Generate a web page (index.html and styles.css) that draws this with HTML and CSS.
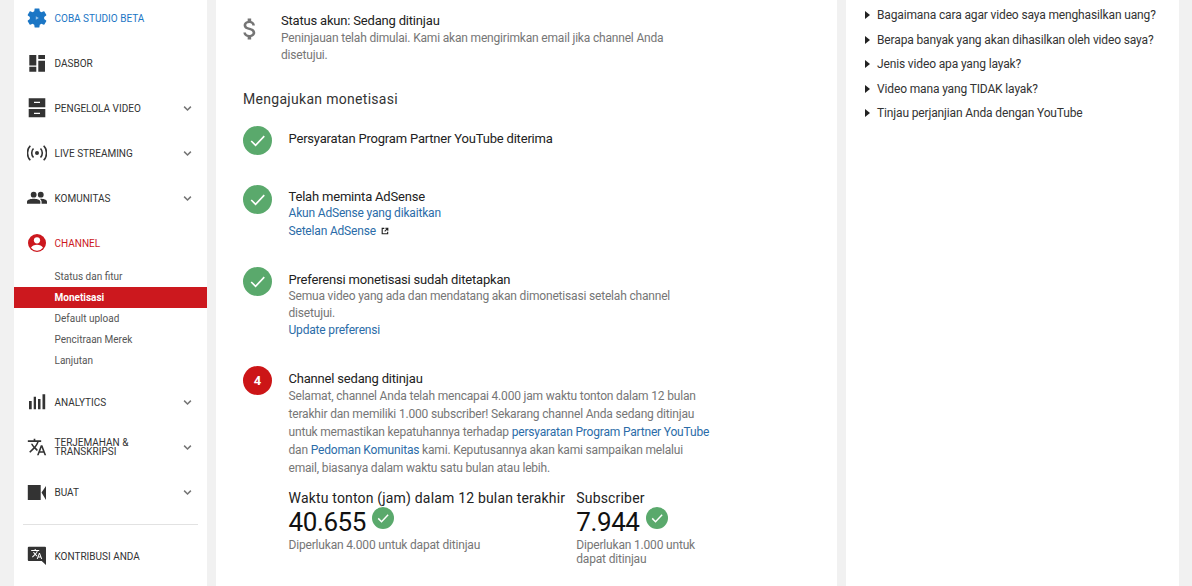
FILE: index.html
```html
<!DOCTYPE html>
<html lang="id">
<head>
<meta charset="utf-8">
<title>Monetisasi</title>
<link rel="stylesheet" href="styles.css">
</head>
<body>
<div class="page">
  <nav class="sidebar">
    <a class="nav-item blue"><svg class="nav-icon" viewBox="2 2 20 20"><path fill="#1b76c5" d="M19.14 12.94c.04-.3.06-.61.06-.94 0-.32-.02-.64-.07-.94l2.03-1.58c.18-.14.23-.41.12-.61l-1.92-3.32c-.12-.22-.37-.29-.59-.22l-2.39.96c-.5-.38-1.03-.7-1.62-.94l-.36-2.54c-.04-.24-.24-.41-.48-.41h-3.84c-.24 0-.43.17-.47.41l-.36 2.54c-.59.24-1.13.57-1.62.94l-2.39-.96c-.22-.08-.47 0-.59.22L2.74 8.87c-.12.21-.08.47.12.61l2.03 1.58c-.05.3-.09.63-.09.94s.02.64.07.94l-2.03 1.58c-.18.14-.23.41-.12.61l1.92 3.32c.12.22.37.29.59.22l2.39-.96c.5.38 1.03.7 1.62.94l.36 2.54c.05.24.24.41.48.41h3.84c.24 0 .44-.17.47-.41l.36-2.54c.59-.24 1.13-.56 1.62-.94l2.39.96c.22.08.47 0 .59-.22l1.92-3.32c.12-.22.07-.47-.12-.61l-2.01-1.58z"/><path fill="#9cc4e8" d="M10.800 10.300l3 1.700-3 1.700z"/></svg><span class="nav-label">COBA STUDIO BETA</span></a>
    <a class="nav-item"><svg class="nav-icon" viewBox="0 0 20 20"><path fill="#333" d="M2.300 2h7v10.600h-7zM2.300 13.700h7v5h-7zM11.300 2H18v4h-6.700zM11.300 7.700H18v11h-6.700z"/></svg><span class="nav-label">DASBOR</span></a>
    <a class="nav-item"><svg class="nav-icon" viewBox="0 0 20 20"><path fill="#333" fill-rule="evenodd" d="M1.700.3h16.600v9H1.700zM1.700 11h16.600v8.300H1.700zM7 3.700v1.300h6V3.700zM7 14.700V16h6v-1.300z"/></svg><span class="nav-label">PENGELOLA VIDEO</span><svg class="chev" viewBox="0 0 12 8"><path d="M1.500 1.500L6 6l4.500-4.500" fill="none" stroke="#757575" stroke-width="2"/></svg></a>
    <a class="nav-item"><svg class="nav-icon" viewBox="0 0 20 20"><circle cx="10" cy="10" r="2" fill="#333"/><path fill="none" stroke="#333" stroke-width="1.600" d="M6.500 5.500a6.500 6.500 0 0 0 0 9M13.500 5.500a6.500 6.500 0 0 1 0 9M3.300 2.800a10.500 10.500 0 0 0 0 14.400M16.700 2.800a10.500 10.500 0 0 1 0 14.400"/></svg><span class="nav-label">LIVE STREAMING</span><svg class="chev" viewBox="0 0 12 8"><path d="M1.500 1.500L6 6l4.500-4.500" fill="none" stroke="#757575" stroke-width="2"/></svg></a>
    <a class="nav-item"><svg class="nav-icon" viewBox="0 0 24 24"><circle cx="8" cy="8" r="3.500" fill="#333"/><circle cx="16.500" cy="8" r="3.500" fill="#333"/><path fill="#333" d="M0 19v-2.500C0 14 5 13 8 13s8 1 8 3.500V19zM17.500 19v-2.500c0-1.400-.8-2.500-2-3.400l1-.1c3 0 7.500 1 7.500 3.500V19z"/></svg><span class="nav-label">KOMUNITAS</span><svg class="chev" viewBox="0 0 12 8"><path d="M1.500 1.500L6 6l4.500-4.500" fill="none" stroke="#757575" stroke-width="2"/></svg></a>
    <a class="nav-item red"><svg class="nav-icon" viewBox="0 0 20 20"><circle cx="10" cy="10" r="9" fill="#cc181e"/><circle cx="10" cy="7.300" r="3.100" fill="#fff"/><path fill="#fff" d="M4 14.800c.9-2 3.400-3 6-3s5.100 1 6 3a7.500 7.500 0 0 1-6 2.900 7.500 7.500 0 0 1-6-2.900z"/></svg><span class="nav-label">CHANNEL</span></a>
    <ul class="subnav">
      <li class="sub-item">Status dan fitur</li>
      <li class="sub-item active">Monetisasi</li>
      <li class="sub-item">Default upload</li>
      <li class="sub-item">Pencitraan Merek</li>
      <li class="sub-item">Lanjutan</li>
    </ul>
    <a class="nav-item"><svg class="nav-icon" viewBox="0 0 20 20"><path fill="#333" d="M2 9h2.700v8.300H2zM6.700 4.700H9v12.600H6.700zM11 7h2.500v10.300H11zM15.500 2.300h2.700v15h-2.700z"/></svg><span class="nav-label">ANALYTICS</span><svg class="chev" viewBox="0 0 12 8"><path d="M1.500 1.500L6 6l4.500-4.500" fill="none" stroke="#757575" stroke-width="2"/></svg></a>
    <a class="nav-item"><svg class="nav-icon" viewBox="0 0 24 24"><path fill="#333" d="M12.870 15.070l-2.540-2.510.03-.03c1.740-1.940 2.980-4.170 3.710-6.530H17V4h-7V2H8v2H1v1.990h11.170C11.500 7.920 10.440 9.750 9 11.350 8.070 10.320 7.300 9.190 6.690 8h-2c.73 1.630 1.730 3.170 2.980 4.560l-5.090 5.020L4 19l5-5 3.110 3.110.76-2.040zM18.500 10h-2L12 22h2l1.120-3h4.750L21 22h2l-4.500-12zm-2.620 7l1.620-4.330L19.120 17h-3.240z"/></svg><span class="nav-label">TERJEMAHAN &amp; TRANSKRIPSI</span><svg class="chev" viewBox="0 0 12 8"><path d="M1.500 1.500L6 6l4.500-4.500" fill="none" stroke="#757575" stroke-width="2"/></svg></a>
    <a class="nav-item"><svg class="nav-icon" viewBox="0 0 20 20"><path fill="#333" d="M.8 3h12.900v15H.8zM14.500 10.500L19 4v14z"/></svg><span class="nav-label">BUAT</span><svg class="chev" viewBox="0 0 12 8"><path d="M1.500 1.500L6 6l4.500-4.500" fill="none" stroke="#757575" stroke-width="2"/></svg></a>
    <hr class="nav-rule">
    <a class="nav-item"><svg class="nav-icon" viewBox="0 0 20 20"><path fill="#333" d="M1.800.7h16.200q1 0 1 1v13.300 4l-4.300-4H1.800q-1 0-1-1V1.700q0-1 1-1z"/><path fill="#fff" transform="translate(3.700 1.900) scale(.5)" d="M12.870 15.070l-2.540-2.510.03-.03c1.740-1.940 2.980-4.170 3.710-6.530H17V4h-7V2H8v2H1v1.990h11.170C11.500 7.920 10.440 9.750 9 11.350 8.070 10.320 7.300 9.190 6.690 8h-2c.73 1.630 1.730 3.170 2.980 4.560l-5.090 5.020L4 19l5-5 3.110 3.110.76-2.040zM18.500 10h-2L12 22h2l1.120-3h4.750L21 22h2l-4.500-12zm-2.620 7l1.620-4.330L19.120 17h-3.240z"/></svg><span class="nav-label">KONTRIBUSI ANDA</span></a>
  </nav>

  <main class="main">
    <section class="status">
      <svg class="dollar" viewBox="0 0 24 24"><path fill="#757575" d="M11.800 10.900c-2.270-.59-3-1.200-3-2.150 0-1.090 1.010-1.850 2.700-1.850 1.780 0 2.440.85 2.500 2.100h2.210c-.07-1.720-1.120-3.300-3.210-3.810V3h-3v2.160c-1.940.42-3.500 1.680-3.500 3.610 0 2.310 1.910 3.460 4.700 4.130 2.500.6 3 1.480 3 2.410 0 .69-.49 1.790-2.700 1.790-2.060 0-2.870-.92-2.980-2.100h-2.200c.12 2.190 1.760 3.420 3.680 3.830V21h3v-2.150c1.950-.37 3.500-1.500 3.500-3.550 0-2.840-2.430-3.810-4.700-4.400z"/></svg>
      <div class="status-body">
        <div class="title">Status akun: Sedang ditinjau</div>
        <p class="muted muted-status">Peninjauan telah dimulai. Kami akan mengirimkan email jika channel Anda disetujui.</p>
      </div>
    </section>
    <h2 class="heading">Mengajukan monetisasi</h2>

    <div class="step step-one">
      <span class="badge"><svg viewBox="0 0 30 30"><path d="M8.500 15.500l4.500 4.500 9-9.500" fill="none" stroke="#fff" stroke-width="1.700"/></svg></span>
      <div class="step-body"><div class="title">Persyaratan Program Partner YouTube diterima</div></div>
    </div>

    <div class="step step-two">
      <span class="badge"><svg viewBox="0 0 30 30"><path d="M8.500 15.500l4.500 4.500 9-9.500" fill="none" stroke="#fff" stroke-width="1.700"/></svg></span>
      <div class="step-body step-body-tight">
        <div class="title">Telah meminta AdSense</div>
        <a class="link block">Akun AdSense yang dikaitkan</a>
        <a class="link block">Setelan AdSense <svg class="ext" viewBox="0 0 12 12"><path fill="none" stroke="#222" stroke-width="1.700" d="M5 2H1.800v8.200H10V7M6.500 1.800h3.700v3.700M10 2L5.500 6.500"/></svg></a>
      </div>
    </div>

    <div class="step step-three">
      <span class="badge"><svg viewBox="0 0 30 30"><path d="M8.500 15.500l4.500 4.500 9-9.500" fill="none" stroke="#fff" stroke-width="1.700"/></svg></span>
      <div class="step-body step-body-compact">
        <div class="title">Preferensi monetisasi sudah ditetapkan</div>
        <p class="muted">Semua video yang ada dan mendatang akan dimonetisasi setelah channel disetujui.</p>
        <a class="link block">Update preferensi</a>
      </div>
    </div>

    <div class="step step-four">
      <span class="badge badge-red">4</span>
      <div class="step-body">
        <div class="title">Channel sedang ditinjau</div>
        <p class="muted">Selamat, channel Anda telah mencapai 4.000 jam waktu tonton dalam 12 bulan terakhir dan memiliki 1.000 subscriber! Sekarang channel Anda sedang ditinjau untuk memastikan kepatuhannya terhadap <a class="link">persyaratan Program Partner YouTube</a> dan <a class="link">Pedoman Komunitas</a> kami. Keputusannya akan kami sampaikan melalui email, biasanya dalam waktu satu bulan atau lebih.</p>
        <div class="metrics">
          <div class="metric">
            <div class="metric-title">Waktu tonton (jam) dalam 12 bulan terakhir</div>
            <div class="metric-value">40.655 <span class="badge badge-small"><svg viewBox="0 0 30 30"><path d="M8.500 15.500l4.500 4.500 9-9.500" fill="none" stroke="#fff" stroke-width="2"/></svg></span></div>
            <div class="metric-note">Diperlukan 4.000 untuk dapat ditinjau</div>
          </div>
          <div class="metric metric-narrow">
            <div class="metric-title">Subscriber</div>
            <div class="metric-value">7.944 <span class="badge badge-small"><svg viewBox="0 0 30 30"><path d="M8.500 15.500l4.500 4.500 9-9.500" fill="none" stroke="#fff" stroke-width="2"/></svg></span></div>
            <div class="metric-note">Diperlukan 1.000 untuk dapat ditinjau</div>
          </div>
        </div>
      </div>
    </div>
  </main>

  <aside class="aside">
    <ul class="help">
      <li class="help-item">Bagaimana cara agar video saya menghasilkan uang?</li>
      <li class="help-item">Berapa banyak yang akan dihasilkan oleh video saya?</li>
      <li class="help-item">Jenis video apa yang layak?</li>
      <li class="help-item">Video mana yang TIDAK layak?</li>
      <li class="help-item">Tinjau perjanjian Anda dengan YouTube</li>
    </ul>
  </aside>
</div>
</body>
</html>
```
FILE: styles.css
```css
* { box-sizing: border-box; }
html, body { margin: 0; height: 586px; overflow: hidden; }
body { background: #f1f1f1; font-family: Roboto, "Liberation Sans", sans-serif; color: #222; }
.page { display: flex; height: 586px; padding-left: 14px; overflow: hidden; }

.sidebar { width: 193px; flex: none; background: #fff; height: 586px; overflow: hidden; }
.nav-item { display: flex; align-items: center; height: 45px; padding: 0 15px 0 13px; color: #333; font-size: 10px; line-height: 9px; }
.nav-item:first-child { height: 36px; margin-bottom: 4.5px; }
.nav-icon { width: 20px; height: 20px; flex: none; margin-right: 7.5px; }
.nav-label { flex: 1; max-width: 120px; margin-right: auto; }
.chev { width: 9px; height: 7px; flex: none; }
.blue { color: #1b76c5; }
.red { color: #cc181e; }
.subnav { list-style: none; margin: .5px 0 8.5px; padding: 0; }
.sub-item { height: 21px; line-height: 21px; padding-left: 40.500px; font-size: 10px; color: #555; }
.sub-item.active { background: #cc181e; color: #fff; font-weight: 700; }
.nav-rule { border: 0; border-top: 1px solid #e2e2e2; margin: 9.500px 9px 8.500px; }

.main { width: 621px; flex: none; margin-left: 9px; background: #fff; padding: 12px 0 0 27px; height: 586px; overflow: hidden; }
.status { display: flex; width: 430px; }
.dollar { width: 28px; height: 28px; flex: none; margin: 2.500px 3px 0 -7px; }
.status-body { flex: 1; min-width: 0; margin-left: 14px; padding-top: 1px; }
.title { font-size: 13px; line-height: 16px; color: #222; letter-spacing: -.19px; }
.muted { margin: 0; font-size: 12px; line-height: 18px; color: #767676; letter-spacing: -.18px; }
.muted-status { line-height: 17px; margin-top: 1px; }
.heading { margin: 25px 0 0; font-size: 14px; line-height: 20px; font-weight: 400; color: #333; letter-spacing: .3px; }
.step { display: flex; width: 471.500px; }
.step-one { margin-top: 17px; }
.step-two { margin-top: 30px; }
.step-three { margin-top: 27px; }
.step-four { margin-top: 27px; }
.badge { width: 29px; height: 29px; border-radius: 50%; background: #5aa96c; flex: none; display: inline-flex; align-items: center; justify-content: center; }
.badge svg { width: 100%; height: 100%; display: block; }
.badge-red { background: #cc1517; color: #fff; font-size: 13px; font-weight: 700; }
.badge-small { width: 22px; height: 22px; vertical-align: 2px; }
.step-body { margin-left: 16.500px; flex: 1; padding-top: 5px; min-width: 0; }
.step-body-tight { padding-top: 4px; }
.step-body-tight .title { margin-bottom: -1px; }
.step-body-compact .muted, .step-body-compact .block { line-height: 17px; }
.link { color: #2b6ca8; text-decoration: none; font-size: 12px; letter-spacing: -.18px; }
.block { display: block; line-height: 18px; }
.ext { width: 8px; height: 8px; margin-left: 2px; }
.metrics { display: flex; margin-top: 12px; gap: 11px; margin-right: -20px; }
.metric-narrow { width: 130px; flex: none; }
.metric-title { font-size: 14px; line-height: 18px; color: #222; letter-spacing: .18px; white-space: nowrap; }
.metric-value { font-size: 26px; line-height: 28px; color: #111; letter-spacing: -.4px; }
.metric-note { font-size: 12px; line-height: 14px; color: #767676; margin-top: 2px; letter-spacing: -.18px; }

.aside { width: 333px; flex: none; margin-left: 9px; background: #fff; height: 586px; padding: 3px 0 0 19px; }
.help { list-style: none; margin: 0; padding: 0; }
.help-item { position: relative; height: 24.600px; line-height: 25px; font-size: 12px; color: #333; padding-left: 12px; white-space: nowrap; letter-spacing: -.14px; }
.help-item::before { content: ""; position: absolute; left: 0; top: 8px; border-left: 5px solid #222; border-top: 4px solid transparent; border-bottom: 4px solid transparent; }
```
